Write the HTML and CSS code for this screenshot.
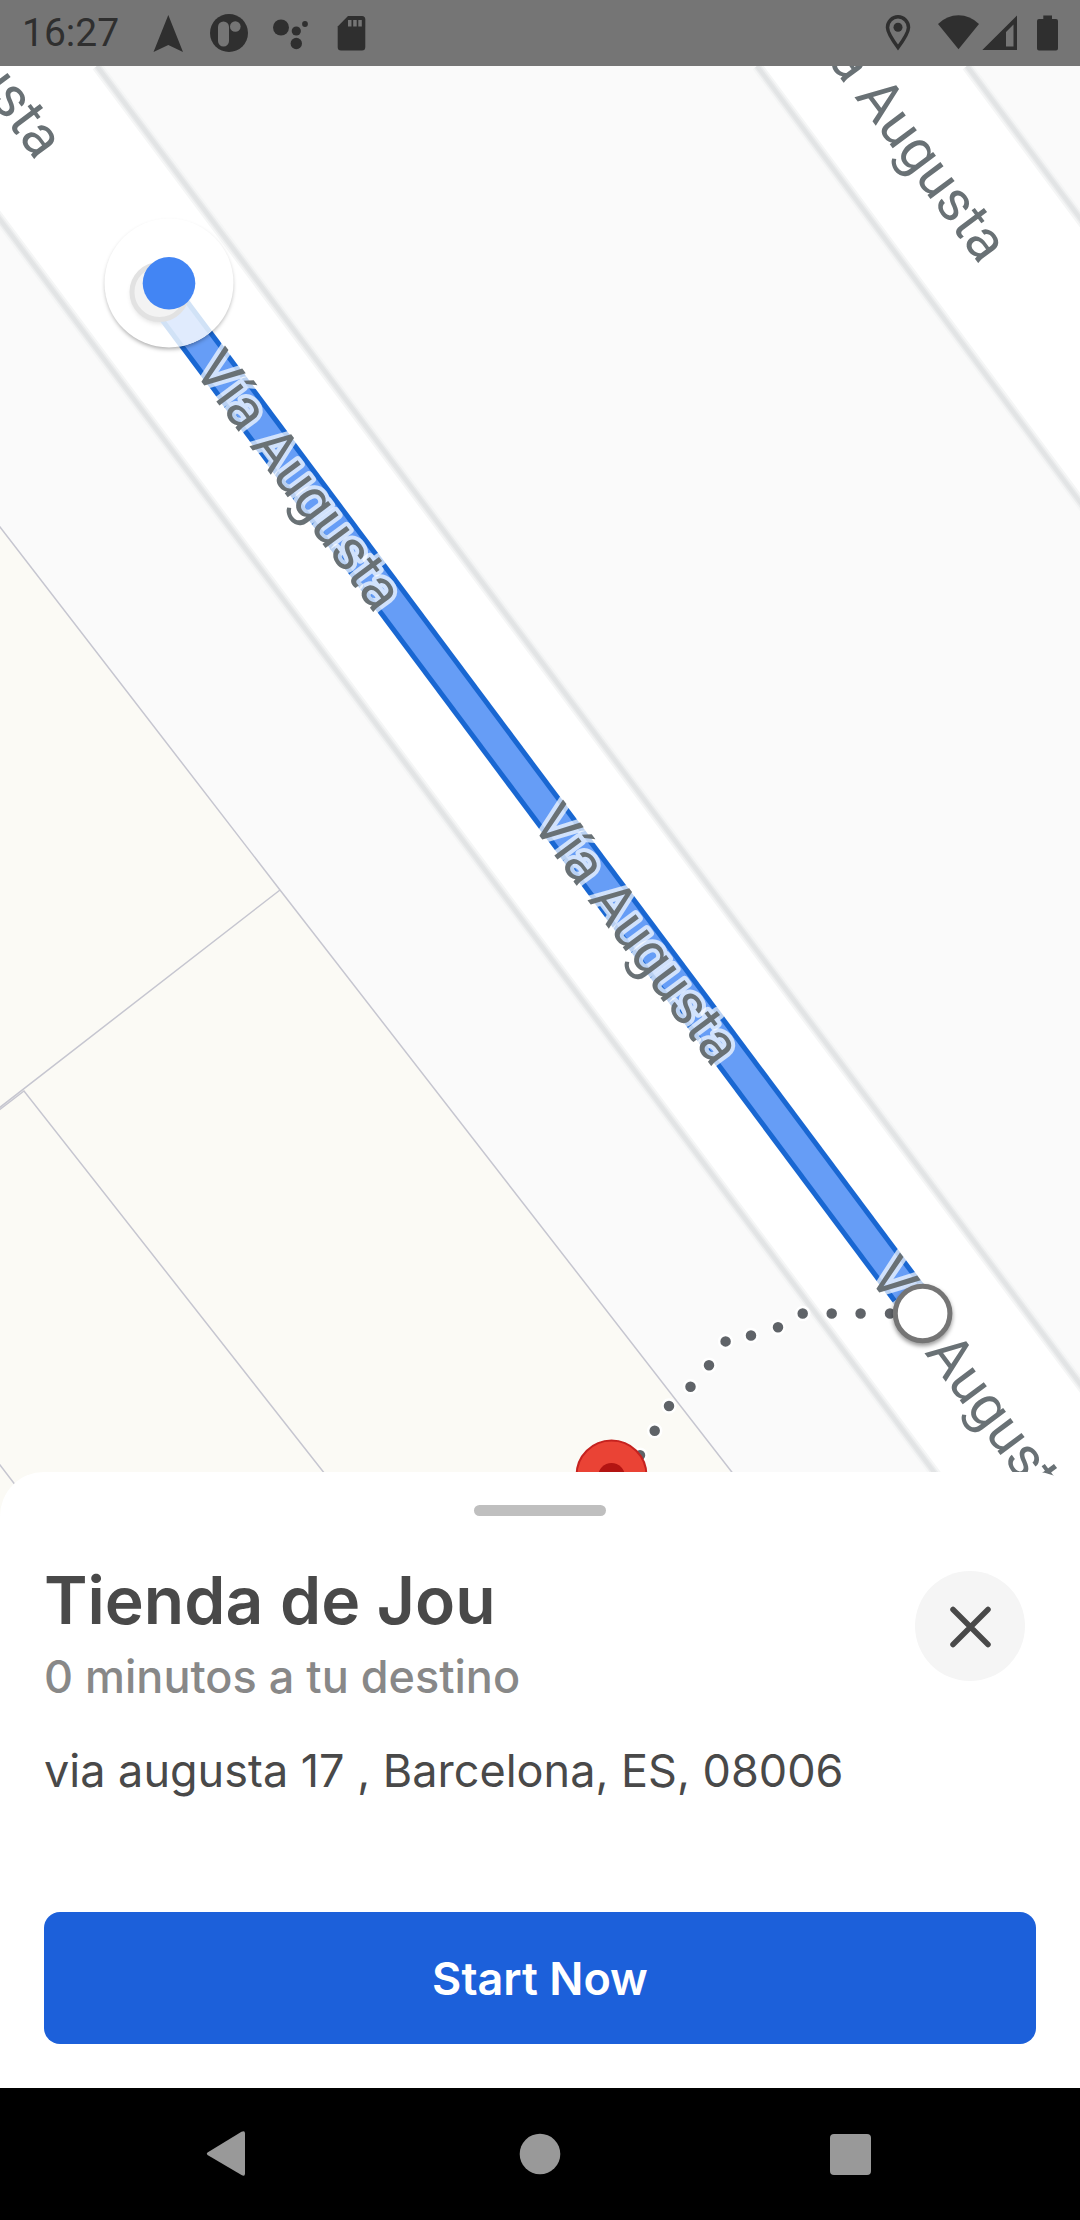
FILE: index.html
```html
<!DOCTYPE html>
<html lang="es">
<head>
<meta charset="utf-8">
<meta name="viewport" content="width=device-width, initial-scale=1">
<title>Tienda de Jou</title>
<link rel="stylesheet" href="styles.css">
</head>
<body>
<div class="screen">
  <header class="status">
    <time class="status-time">16:27</time>
    <div class="status-notes">
      <svg class="status-icon" viewBox="146 0 44 66" aria-hidden="true"><path d="M168.300 15L183 52L168.300 45L153.500 52Z"/></svg>
      <svg class="status-icon" viewBox="207 0 44 66" aria-hidden="true"><circle cx="229" cy="33" r="19"/><rect class="cut" x="218" y="21.500" width="11" height="25" rx="5.500"/><circle class="cut" cx="235.300" cy="26.500" r="5.300"/></svg>
      <svg class="status-icon" viewBox="268 0 44 66" aria-hidden="true"><circle cx="281" cy="27.500" r="8"/><circle cx="296.300" cy="31" r="4.600"/><circle cx="296.300" cy="43.500" r="5.700"/><circle cx="305" cy="24" r="2.900"/></svg>
      <svg class="status-icon" viewBox="329 0 44 66" aria-hidden="true"><path d="M348 16H362Q365.300 16 365.300 19.500V47Q365.300 50.500 362 50.500H341Q337.700 50.500 337.700 47V26.500Z"/><path class="cut" d="M348 20h3.500v6.500H348zM353.200 20h3.500v6.500h-3.500zM358.300 20h3.500v6.500h-3.500z"/></svg>
    </div>
    <div class="status-system">
      <svg class="status-icon location" viewBox="876 0 44 66" aria-hidden="true"><path class="line" d="M898 47.500C891 38 887.500 32.500 887.500 27.500A10.500 10.700 0 0 1 908.500 27.500C908.500 32.500 905 38 898 47.500Z"/><circle cx="898" cy="27.300" r="4.500"/></svg>
      <svg class="status-icon" viewBox="936 0 44 66" aria-hidden="true"><path d="M938 24Q947 15.300 958.500 15.300Q970 15.300 979 24L958.500 49.300Z"/></svg>
      <svg class="status-icon" viewBox="978 0 44 66" aria-hidden="true"><path fill-rule="evenodd" d="M1017 15.500V50H982.300ZM1013.500 24.500L1006 32V46.500H1013.500Z"/></svg>
      <svg class="status-icon" viewBox="1026 0 44 66" aria-hidden="true"><path d="M1043.300 15.500H1052V19H1056Q1058 19 1058 21V48.500Q1058 50.500 1056 50.500H1039Q1037 50.500 1037 48.500V21Q1037 19 1039 19H1043.300Z"/></svg>
    </div>
  </header>

  <main class="map">
    <svg class="map-canvas" viewBox="0 66 1080 1450" preserveAspectRatio="xMidYMin slice" role="img" aria-label="Mapa de Vía Augusta">
      <defs>
        <filter id="soft" x="-30%" y="-30%" width="160%" height="160%"><feGaussianBlur stdDeviation="2"/></filter>
        <clipPath id="disc"><circle cx="169" cy="283" r="64"/></clipPath>
      </defs>

      <rect class="land" x="0" y="66" width="1080" height="1450"/>

      <!-- building plots -->
      <path class="plot" d="M-10 514L280 890L766 1516H-10Z"/>
      <path class="plot-line" d="M280 890L-10 1115M-10 1117L24 1091L358 1516M-10 1452L39 1516"/>

      <!-- roads -->
      <path class="road" d="M-60 -145L97 66L1180 1518L966 1515L-40 166Z"/>
      <path class="road" d="M757 66L967 66L1140 299V583Z"/>
      <path class="kerb-soft" d="M97 66L1140 1464M-40 166L966 1515M757 66L1140 583M967 66L1140 299"/>
      <path class="kerb-mid" d="M97 66L1140 1464M-40 166L966 1515M757 66L1140 583M967 66L1140 299"/>
      <path class="kerb" d="M97 66L1140 1464M-40 166L966 1515M757 66L1140 583M967 66L1140 299"/>

      <!-- route -->
      <path class="route-edge" d="M160 291L923 1313"/>
      <path class="route" d="M160 291L923 1313"/>

      <!-- street names -->
      <g class="street">
        <text transform="translate(-147 -84) rotate(53.300)">Vía Augusta</text>
        <text transform="translate(192 369) rotate(53.300)">Vía Augusta</text>
        <text transform="translate(530 823) rotate(53.300)">Vía Augusta</text>
        <text transform="translate(867 1276) rotate(53.300)">Vía Augusta</text>
        <text transform="translate(797 20) rotate(53.300)">Vía Augusta</text>
      </g>

      <!-- walking stretch to the shop -->
      <g class="walk">
        <circle cx="890" cy="1313.500" r="6.500"/><circle cx="860.600" cy="1313.500" r="6.500"/><circle cx="831.700" cy="1313.500" r="6.500"/><circle cx="802.700" cy="1313.500" r="6.500"/><circle cx="778" cy="1327.300" r="6.500"/><circle cx="751" cy="1335.500" r="6.500"/><circle cx="725.600" cy="1341.400" r="6.500"/><circle cx="709" cy="1365.300" r="6.500"/><circle cx="690.500" cy="1386.700" r="6.500"/><circle cx="669" cy="1406" r="6.500"/><circle cx="654.700" cy="1430.700" r="6.500"/><circle cx="640" cy="1455.300" r="6.500"/>
      </g>

      <!-- route end -->
      <circle class="end-shadow" cx="922.600" cy="1316" r="30" filter="url(#soft)"/>
      <circle class="end" cx="922.600" cy="1313.500" r="27.300"/>

      <!-- shop pin -->
      <path class="pin" d="M611.500 1440.500A35 35 0 0 1 646.500 1475.500C646.500 1495 620 1510 611.500 1550C603 1510 576.500 1495 576.500 1475.500A35 35 0 0 1 611.500 1440.500Z"/>
      <circle class="pin-dot" cx="611.500" cy="1476.500" r="13.500"/>

      <!-- current position -->
      <circle class="here-shadow" cx="169" cy="285.500" r="63.500" filter="url(#soft)"/>
      <circle class="road" cx="169" cy="283" r="64.500"/>
      <g clip-path="url(#disc)">
        <circle class="origin-shadow" cx="159.500" cy="295" r="29" filter="url(#soft)"/>
        <path class="route-edge faded" d="M174 310L260 425"/>
        <path class="route faded" d="M174 310L260 425"/>
        <circle class="origin" cx="159.500" cy="292" r="27.500"/>
      </g>
      <circle class="here" cx="169" cy="283.300" r="26.300"/>
    </svg>
  </main>

  <section class="sheet">
    <div class="handle"></div>
    <div class="place">
      <div class="place-text">
        <h1 class="place-name">Tienda de Jou</h1>
        <p class="place-eta">0 minutos a tu destino</p>
      </div>
      <button class="close" type="button" aria-label="Cerrar">
        <svg class="close-icon" viewBox="0 0 44 44" aria-hidden="true"><path d="M5 5.500L40 40.500M40 5.500L5 40.500"/></svg>
      </button>
    </div>
    <p class="place-address">via augusta 17 , Barcelona, ES, 08006</p>
    <button class="start" type="button">Start Now</button>
  </section>

  <nav class="system-nav">
    <button class="nav-button" type="button" aria-label="Atrás"><svg class="nav-icon" viewBox="0 0 48 48" aria-hidden="true"><path d="M1.500 22.500L35.500 1.800Q39 0 39 3.500V43.500Q39 47 35.500 45L1.500 25Q0 23.700 1.500 22.500Z"/></svg></button>
    <button class="nav-button" type="button" aria-label="Inicio"><svg class="nav-icon" viewBox="0 0 48 48" aria-hidden="true"><circle cx="24" cy="24" r="20.300"/></svg></button>
    <button class="nav-button" type="button" aria-label="Recientes"><svg class="nav-icon" viewBox="0 0 48 48" aria-hidden="true"><rect x="4" y="4" width="41" height="41" rx="4"/></svg></button>
  </nav>
</div>
</body>
</html>
```
FILE: styles.css
```css
* {
  box-sizing: border-box;
}

body {
  margin: 0;
  font-family: Inter, "Liberation Sans", sans-serif;
  color: #494949;
  background: #fff;
}

h1,
p {
  margin: 0;
}

button {
  border: 0;
  padding: 0;
  font: inherit;
}

.screen {
  display: flex;
  flex-direction: column;
  min-height: 100vh;
}

/* status bar */
.status {
  display: flex;
  align-items: center;
  height: 66px;
  padding: 0 10px 0 22px;
  background: #757575;
  color: #2f2f2f;
}

.status-time {
  width: 124px;
  font-family: Roboto, sans-serif;
  font-size: 39px;
  line-height: 66px;
}

.status-notes {
  display: flex;
  gap: 17px;
}

.status-system {
  display: flex;
  margin-left: auto;
}

.status-icon {
  display: block;
  width: 44px;
  height: 66px;
  fill: #2f2f2f;
}

.status-system .status-icon {
  margin-left: 4px;
}

.status-system .status-icon:nth-child(3) {
  margin-left: -2px;
}

.status-system .location {
  margin-right: 12px;
}

.cut {
  fill: #757575;
}

.line {
  fill: none;
  stroke: #2f2f2f;
  stroke-width: 3.5;
}

/* map */
.map {
  flex: 1;
  position: relative;
  min-height: 400px;
  overflow: hidden;
}

.map-canvas {
  position: absolute;
  inset: 0;
  width: 100%;
  height: 100%;
}

.land {
  fill: #fafafa;
}

.plot {
  fill: #fbfaf5;
  stroke: #c6c6d0;
  stroke-width: 1.5;
}

.plot-line {
  fill: none;
  stroke: #c6c6d0;
  stroke-width: 1.5;
}

.road {
  fill: #fff;
}

.kerb-soft,
.kerb-mid,
.kerb {
  fill: none;
  stroke: #f5f6f6;
  stroke-width: 11;
}

.kerb-mid {
  stroke: #ebeced;
  stroke-width: 7;
}

.kerb {
  stroke: #e2e4e5;
  stroke-width: 4;
}

.route-edge {
  stroke: #1967d2;
  stroke-width: 36;
}

.route {
  stroke: #669df6;
  stroke-width: 26;
}

.route-edge.faded {
  stroke: #d1e2f6;
}

.route.faded {
  stroke: #e0ebfd;
}

.street {
  font-family: Roboto, sans-serif;
  font-size: 57px;
  fill: #697175;
  stroke: rgba(255, 255, 255, 0.7);
  stroke-width: 8;
  stroke-linejoin: round;
  paint-order: stroke;
}

.walk {
  fill: #5f6368;
  stroke: #fff;
  stroke-width: 2.5;
}

.end {
  fill: #fff;
  stroke: #757575;
  stroke-width: 5;
}

.end-shadow {
  fill: rgba(0, 0, 0, 0.4);
}

.pin {
  fill: #ea4335;
  stroke: #c5221f;
  stroke-width: 2;
}

.pin-dot {
  fill: #b31412;
}

.here {
  fill: #4285f4;
}

.here-shadow {
  fill: rgba(0, 0, 0, 0.35);
}

.origin {
  fill: #f3f3f3;
  stroke: #e2e2e2;
  stroke-width: 5;
}

.origin-shadow {
  fill: rgba(0, 0, 0, 0.1);
}

/* bottom sheet */
.sheet {
  position: relative;
  display: flex;
  flex-direction: column;
  margin-top: -44px;
  padding: 33px 44px 44px;
  border-radius: 44px 44px 0 0;
  background: #fff;
}

.handle {
  align-self: center;
  width: 132px;
  height: 11px;
  border-radius: 6px;
  background: #bfbfbf;
}

.place {
  display: flex;
  justify-content: space-between;
  align-items: flex-start;
  margin-top: 42px;
  padding-right: 11px;
}

.place-name {
  font-size: 66px;
  font-weight: 600;
  line-height: 84px;
}

.place-eta {
  font-size: 45px;
  font-weight: 500;
  line-height: 70px;
  color: #888;
}

.close {
  display: grid;
  place-items: center;
  width: 110px;
  height: 110px;
  margin-top: 13px;
  border-radius: 50%;
  background: #f5f5f5;
}

.close-icon {
  width: 44px;
  height: 44px;
  fill: none;
  stroke: #494949;
  stroke-width: 5.5;
  stroke-linecap: round;
}

.place-address {
  margin-top: 24px;
  font-size: 45px;
  line-height: 70px;
}

.start {
  height: 132px;
  margin-top: 106px;
  border-radius: 16px;
  background: #1c60da;
  color: #fff;
  font-size: 45px;
  font-weight: 600;
}

/* system navigation */
.system-nav {
  display: flex;
  justify-content: center;
  height: 132px;
  background: #000;
}

.nav-button {
  display: grid;
  place-items: center;
  width: 310px;
  background: none;
}

.nav-icon {
  width: 48px;
  height: 48px;
  fill: #999;
}
```
